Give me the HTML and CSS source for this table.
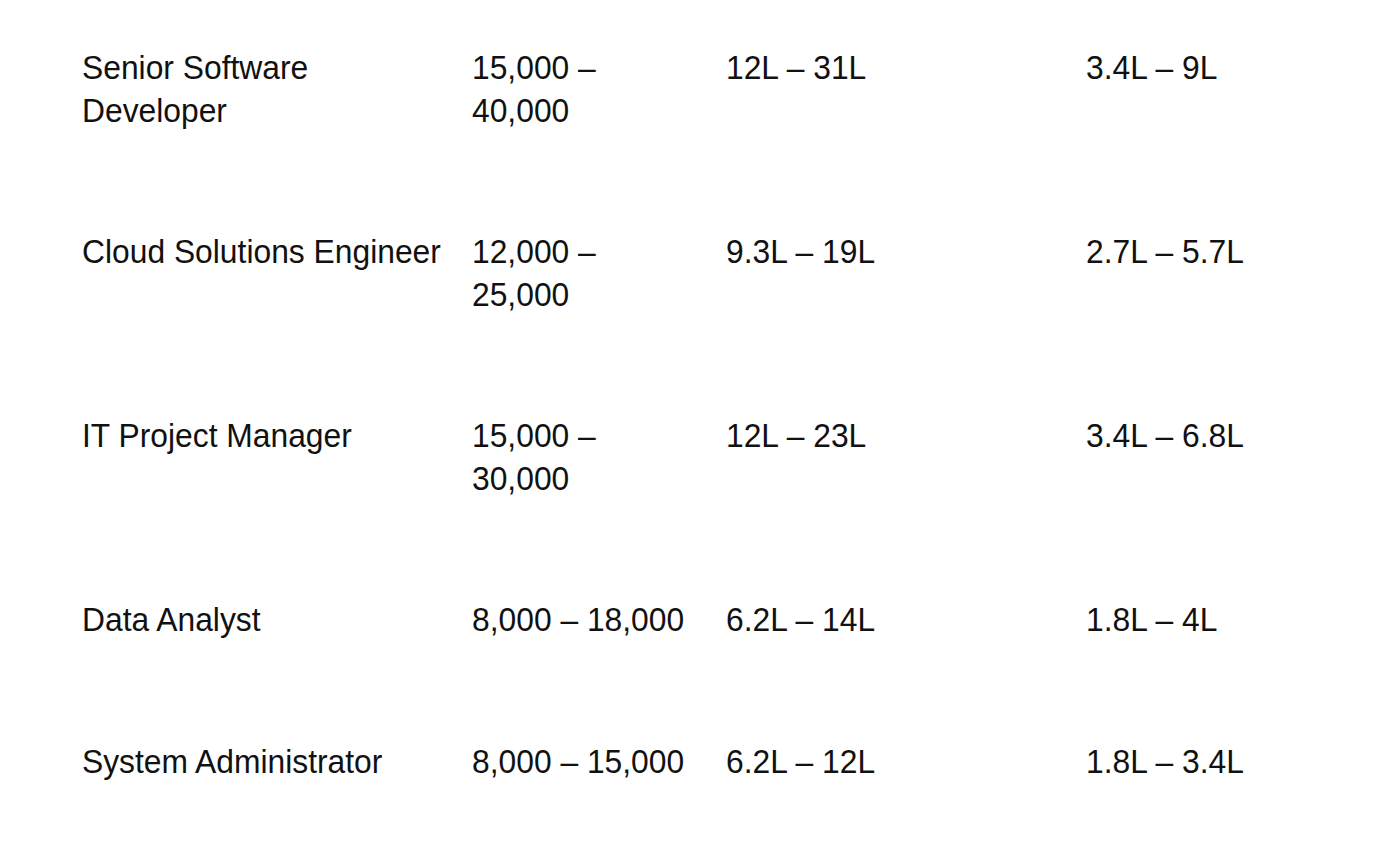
FILE: index.html
```html
<!DOCTYPE html>
<html lang="en">
<head>
<meta charset="utf-8">
<title>Salary ranges</title>
<link rel="stylesheet" href="styles.css">
</head>
<body>
<div class="salary-table">
  <div class="row">
    <div class="cell role">Senior Software Developer</div>
    <div class="cell usd">15,000 – 40,000</div>
    <div class="cell inr">12L – 31L</div>
    <div class="cell lpa">3.4L – 9L</div>
  </div>
  <div class="row">
    <div class="cell role">Cloud Solutions Engineer</div>
    <div class="cell usd">12,000 – 25,000</div>
    <div class="cell inr">9.3L – 19L</div>
    <div class="cell lpa">2.7L – 5.7L</div>
  </div>
  <div class="row">
    <div class="cell role">IT Project Manager</div>
    <div class="cell usd">15,000 – 30,000</div>
    <div class="cell inr">12L – 23L</div>
    <div class="cell lpa">3.4L – 6.8L</div>
  </div>
  <div class="row">
    <div class="cell role">Data Analyst</div>
    <div class="cell usd">8,000 – 18,000</div>
    <div class="cell inr">6.2L – 14L</div>
    <div class="cell lpa">1.8L – 4L</div>
  </div>
  <div class="row">
    <div class="cell role">System Administrator</div>
    <div class="cell usd">8,000 – 15,000</div>
    <div class="cell inr">6.2L – 12L</div>
    <div class="cell lpa">1.8L – 3.4L</div>
  </div>
</div>
</body>
</html>
```

FILE: styles.css
```css
html, body {
  margin: 0;
  padding: 0;
  background: #ffffff;
}

body {
  font-family: "Liberation Sans", Arial, sans-serif;
  color: #111111;
  overflow: hidden;
}

.salary-table {
  padding-left: 82px;
  transform: scaleY(1.07);
  transform-origin: 0 0;
  font-size: 31.8px;
  line-height: 39.8px;
}

.row {
  display: grid;
  grid-template-columns: 390px 254px 360px 1fr;
  padding: 44px 0 48.3px 0;
}

.cell.role {
  padding-right: 16px;
}

.cell.usd {
  padding-right: 32px;
}
```
